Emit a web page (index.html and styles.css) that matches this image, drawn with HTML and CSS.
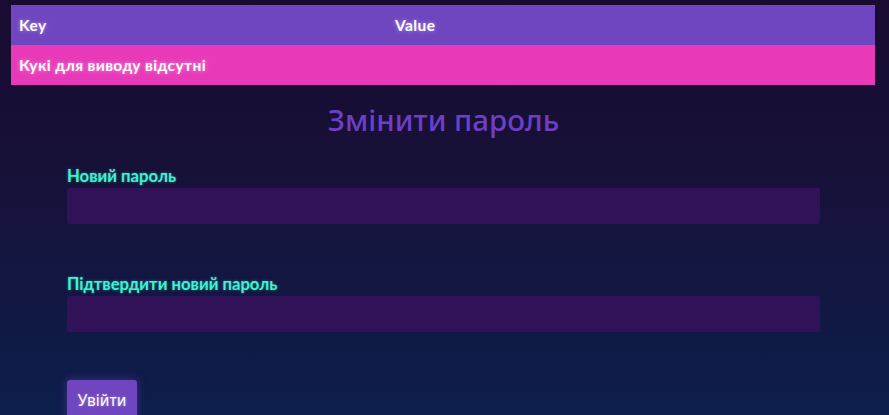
FILE: index.html
```html
<!DOCTYPE html>
<html lang="uk">
<head>
<meta charset="utf-8">
<link rel="stylesheet" href="styles.css">
</head>
<body>
<table class="cookies">
  <thead>
    <tr><th class="col-key">Key</th><th class="col-value">Value</th></tr>
  </thead>
  <tbody>
    <tr><td colspan="2">Кукі для виводу відсутні</td></tr>
  </tbody>
</table>
<main class="page">
  <h1 class="title">Змінити пароль</h1>
  <form class="form">
    <div class="field">
      <label class="label">Новий пароль</label>
      <input class="input" type="password">
    </div>
    <div class="field">
      <label class="label">Підтвердити новий пароль</label>
      <input class="input" type="password">
    </div>
    <div class="actions">
      <button class="btn" type="button">Увійти</button>
    </div>
  </form>
</main>
</body>
</html>
```
FILE: styles.css
```css
html, body {
  margin: 0;
  padding: 0;
}
body {
  min-height: 415px;
  height: 415px;
  overflow: hidden;
  background: linear-gradient(180deg, #190a31 0%, #171138 40%, #0d1e4d 100%);
  font-family: Lato, "Noto Sans", sans-serif;
  color: #fff;
  padding-top: 5px;
}
.cookies {
  width: 864px;
  margin: 0 auto 0 11px;
  border-collapse: collapse;
  font-weight: 700;
  font-size: 15.5px;
  letter-spacing: 0.4px;
  color: #fff;
  text-shadow: 0 0 4px rgba(255,255,255,0.45);
}
.cookies th, .cookies td {
  height: 40px;
  padding: 0 8px;
  text-align: left;
  box-sizing: border-box;
}
.cookies thead tr { background: #7045c0; }
.cookies tbody tr { background: #e83ab8; }
.col-key { width: 376px; }
.page {
  margin: 0 69px 0 67px;
}
.title {
  margin: 15px 0 0;
  text-align: center;
  font-family: "Noto Sans", Lato, sans-serif;
  font-size: 29.5px;
  font-weight: 550;
  color: #6c3fc6;
  line-height: 40px;
}
.form {
  display: flex;
  flex-direction: column;
  margin-top: 26px;
}
.field {
  display: flex;
  flex-direction: column;
  margin-bottom: 50px;
}
.field + .field { margin-bottom: 0; }
.label {
  font-size: 16.7px;
  font-weight: 700;
  color: #3ff2d2;
  line-height: 20px;
  height: 20px;
  margin-bottom: 2px;
  text-shadow: 0 0 3px rgba(63,242,210,0.45);
}
.input {
  height: 36px;
  box-sizing: border-box;
  border: none;
  border-radius: 3px;
  background: #311259;
  outline: none;
}
.actions {
  margin-top: 48px;
}
.btn {
  height: 40px;
  width: 70px;
  border: none;
  border-radius: 3px;
  background: #7045c0;
  color: #fff;
  font-family: "Noto Sans", sans-serif;
  font-size: 15.5px;
  padding: 0;
  box-shadow: 0 0 8px rgba(112,69,192,0.5);
  text-shadow: 0 0 3px rgba(255,255,255,0.4);
}
```
